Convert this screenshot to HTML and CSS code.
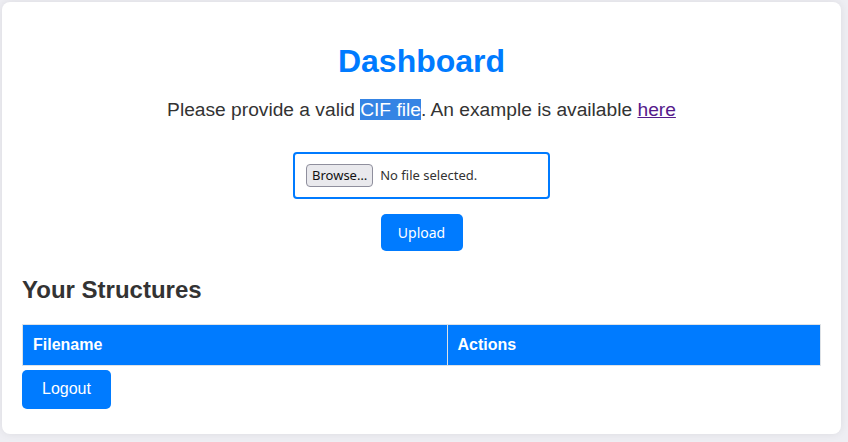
FILE: index.html
```html
<!DOCTYPE html>
<html lang="en">
<head>
<meta charset="utf-8">
<title>Dashboard</title>
<link rel="stylesheet" href="styles.css">
</head>
<body>
<main class="card">
  <h1 class="title">Dashboard</h1>
  <p class="intro">Please provide a valid <span class="sel">CIF file</span>. An example is available <a class="link" href="#">here</a></p>
  <form class="upload-form">
    <label class="file-box">
      <span class="browse">Browse…</span>
      <span class="file-status">No file selected.</span>
    </label>
    <button type="button" class="btn-upload">Upload</button>
  </form>
  <h2 class="section-title">Your Structures</h2>
  <table class="structures">
    <thead>
      <tr><th class="col-name">Filename</th><th>Actions</th></tr>
    </thead>
  </table>
  <button type="button" class="btn-logout">Logout</button>
</main>
</body>
</html>
```
FILE: styles.css
```css
* { box-sizing: border-box; }
html, body { height: 100%; }
body {
  margin: 0;
  background: #eeeef3;
  font-family: "Liberation Sans", Arial, sans-serif;
  color: #333;
}
.card {
  margin: 2px 7px 8px 2px;
  background: #fff;
  border-radius: 8px;
  box-shadow: 0 0 8px rgba(0, 0, 0, 0.08);
  padding: 20px 20px 25px;
}
.title {
  margin: 20.5px 0 0;
  text-align: center;
  font-size: 32px;
  font-weight: bold;
  color: #007bff;
}
.intro {
  margin: 19px 0 31px;
  text-align: center;
  font-size: 19.2px;
}
.sel { background: #3584e4; color: #fff; }
.link { color: #551a8b; text-decoration: underline; }
.upload-form {
  display: flex;
  flex-direction: column;
  align-items: center;
  gap: 15px;
}
.file-box {
  display: flex;
  align-items: center;
  gap: 7px;
  width: 257px;
  height: 47px;
  padding: 0 10px 0 11px;
  border: 2px solid #007bff;
  border-radius: 4px;
  font-family: "Noto Sans", sans-serif;
  font-size: 13px;
  color: #222;
}
.browse {
  display: inline-flex;
  align-items: center;
  height: 23px;
  padding: 0 5px 0 5px;
  background: #e9e9ed;
  border: 1px solid #8f8f9d;
  border-radius: 4px;
  color: #111;
}
.file-status { color: #333; }
.btn-upload {
  height: 37px;
  width: 82px;
  border: none;
  border-radius: 5px;
  background: #007bff;
  color: #fff;
  font-family: "Noto Sans", sans-serif;
  font-size: 14px;
}
.section-title {
  margin: 25px 0 20px;
  font-size: 24px;
  font-weight: bold;
  color: #333;
}
.structures {
  width: 100%;
  border-collapse: collapse;
}
.structures th {
  height: 41px;
  background: #007bff;
  color: #fff;
  text-align: left;
  font-size: 16px;
  font-weight: bold;
  padding: 10px;
  border: 1px solid #dee2e6;
}
.col-name { width: 53.2%; }
.btn-logout {
  display: block;
  margin-top: 4px;
  height: 39px;
  padding: 0 20px;
  border: none;
  border-radius: 5px;
  background: #007bff;
  color: #fff;
  font-family: "Liberation Sans", Arial, sans-serif;
  font-size: 16px;
}
```
